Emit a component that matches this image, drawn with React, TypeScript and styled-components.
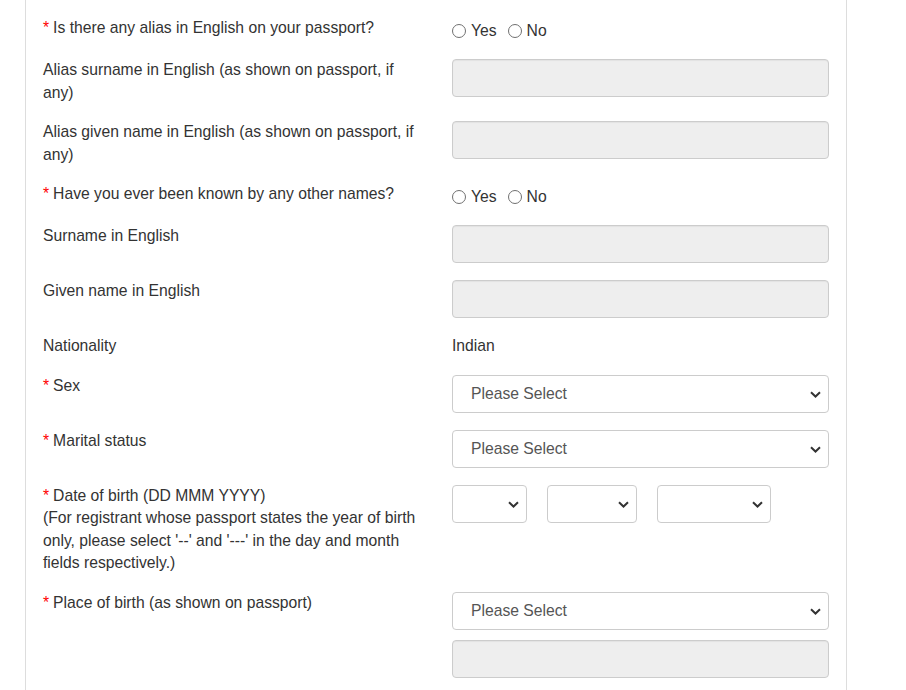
import React from 'react';
import styled, { createGlobalStyle } from 'styled-components';

const GlobalStyle = createGlobalStyle`
  html, body {
    margin: 0;
    padding: 0;
    background: #fff;
  }

  body {
    font-family: "Liberation Sans", Arial, sans-serif;
    font-size: 15.7px;
    color: #333;
  }
`;

const Panel = styled.div`
  margin-left: 25px;
  width: 822px;
  min-height: 700px;
  border-left: 1px solid #ddd;
  border-right: 1px solid #ddd;
  padding: 17px 0 0 17px;
  box-sizing: border-box;
`;

const Row = styled.div`
  display: grid;
  grid-template-columns: 380px 377px;
  column-gap: 29px;
  align-items: start;
  margin-bottom: 17px;
`;

const Label = styled.div`
  line-height: 22.5px;
  color: #333;
`;

const Required = styled.span`
  color: #f00;
  margin-right: 4px;
`;

const Controls = styled.div`
  display: flex;
  flex-direction: column;
  gap: 10px;
`;

const Plain = styled.div`
  line-height: 22px;
`;

const RadioGroup = styled.div`
  display: flex;
  align-items: center;
  height: 25px;
  padding-top: 2px;
  box-sizing: border-box;
`;

const RadioOption = styled.label`
  display: flex;
  align-items: center;
  margin-right: 11px;
  line-height: 20px;

  input {
    appearance: none;
    margin: 0 5px 0 0;
    width: 14px;
    height: 14px;
    border: 1px solid #707070;
    border-radius: 50%;
    background: #fff;
    box-sizing: border-box;
  }
`;

const Field = styled.input`
  display: block;
  width: 100%;
  height: 38px;
  box-sizing: border-box;
  border: 1px solid #ccc;
  border-radius: 4px;
  background: #eee;
  box-shadow: inset 0 1px 1px rgba(0, 0, 0, 0.05);
  font: inherit;
`;

const SelectWrap = styled.div<{ $width?: number }>`
  position: relative;
  width: ${({ $width }) => ($width ? `${$width}px` : '100%')};
  height: 38px;
  flex: none;

  svg {
    position: absolute;
    right: 8px;
    top: 16px;
    pointer-events: none;
  }
`;

const Select = styled.select`
  appearance: none;
  width: 100%;
  height: 38px;
  box-sizing: border-box;
  border: 1px solid #ccc;
  border-radius: 4px;
  background: #fff;
  padding: 0 30px 0 18px;
  font: inherit;
  color: #555;
`;

const DateSelects = styled.div`
  display: flex;
  gap: 20px;
`;

function Chevron () {
  return (
    <svg width='11' height='7' viewBox='0 0 11 7'>
      <path d='M1 1.2 L5.5 5.5 L10 1.2' fill='none' stroke='#333' strokeWidth='2' />
    </svg>
  );
}

function Dropdown ({ placeholder, width }: { placeholder?: string; width?: number }) {
  return (
    <SelectWrap $width={width}>
      <Select defaultValue=''>
        <option value=''>{placeholder ?? ''}</option>
      </Select>
      <Chevron />
    </SelectWrap>
  );
}

function YesNo ({ name }: { name: string }) {
  return (
    <RadioGroup>
      <RadioOption><input name={name} type='radio' />Yes</RadioOption>
      <RadioOption><input name={name} type='radio' />No</RadioOption>
    </RadioGroup>
  );
}

function FieldLabel ({ children, required }: { children: React.ReactNode; required?: boolean }) {
  return (
    <Label>
      {required && <Required>*</Required>}
      {children}
    </Label>
  );
}

export default function App () {
  return (
    <>
      <GlobalStyle />
      <Panel>
        <Row>
          <FieldLabel required>Is there any alias in English on your passport?</FieldLabel>
          <YesNo name='alias' />
        </Row>
        <Row>
          <FieldLabel>Alias surname in English (as shown on passport, if any)</FieldLabel>
          <Field disabled />
        </Row>
        <Row>
          <FieldLabel>Alias given name in English (as shown on passport, if any)</FieldLabel>
          <Field disabled />
        </Row>
        <Row>
          <FieldLabel required>Have you ever been known by any other names?</FieldLabel>
          <YesNo name='othernames' />
        </Row>
        <Row>
          <FieldLabel>Surname in English</FieldLabel>
          <Field disabled />
        </Row>
        <Row>
          <FieldLabel>Given name in English</FieldLabel>
          <Field disabled />
        </Row>
        <Row>
          <FieldLabel>Nationality</FieldLabel>
          <Plain>Indian</Plain>
        </Row>
        <Row>
          <FieldLabel required>Sex</FieldLabel>
          <Dropdown placeholder='Please Select' />
        </Row>
        <Row>
          <FieldLabel required>Marital status</FieldLabel>
          <Dropdown placeholder='Please Select' />
        </Row>
        <Row>
          <FieldLabel required>
            Date of birth (DD MMM YYYY)
            <br />
            (For registrant whose passport states the year of birth only, please select '--' and '---' in the day and month fields respectively.)
          </FieldLabel>
          <DateSelects>
            <Dropdown width={75} />
            <Dropdown width={90} />
            <Dropdown width={114} />
          </DateSelects>
        </Row>
        <Row>
          <FieldLabel required>Place of birth (as shown on passport)</FieldLabel>
          <Controls>
            <Dropdown placeholder='Please Select' />
            <Field disabled />
          </Controls>
        </Row>
      </Panel>
    </>
  );
}
